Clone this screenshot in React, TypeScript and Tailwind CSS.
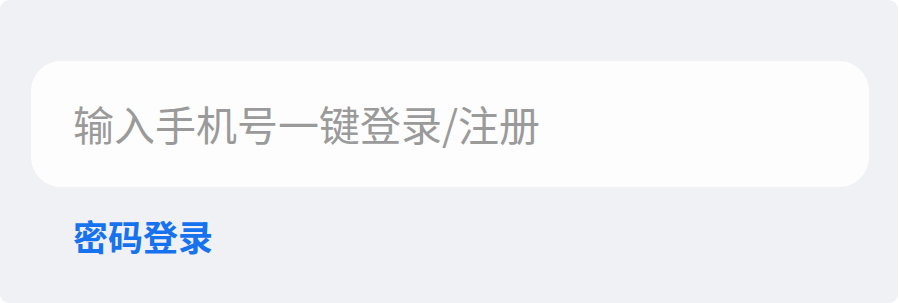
import React from "react";

export default function App() {
  return (
    <div className="w-[900px] h-[303px] bg-white" style={{ fontFamily: '"Noto Sans CJK SC", "Noto Sans", sans-serif' }}>
      <div className="h-full w-[898px] rounded-[9px] bg-[#f0f1f4] pt-[61px] pl-[31px] pr-[29px]">
        <div className="h-[126px] rounded-[30px] bg-[#fdfdfd] flex items-center pl-[42px]">
          <input
            className="w-full bg-transparent outline-none text-[41px] text-[#333] placeholder:text-[#9a9a9a]"
            placeholder="输入手机号一键登录/注册"
          />
        </div>
        <div className="mt-[30px] pl-[42px] text-[35px] leading-[38px] font-bold text-[#1672ee]">密码登录</div>
      </div>
    </div>
  );
}
